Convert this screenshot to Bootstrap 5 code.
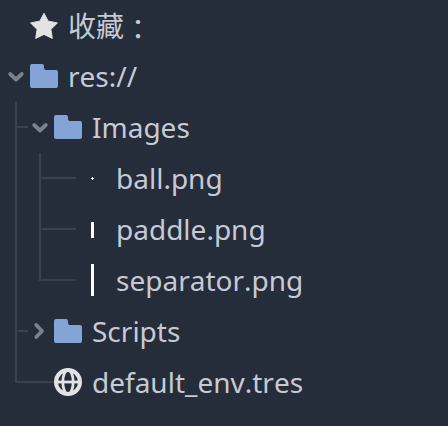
<!DOCTYPE html>
<html lang="zh-CN">
<head>
<meta charset="utf-8">
<meta name="viewport" content="width=device-width, initial-scale=1">
<title>FileSystem</title>
<link href="https://cdn.jsdelivr.net/npm/bootstrap@5.3.0/dist/css/bootstrap.min.css" rel="stylesheet">
<style>
body { background: #252c3a; color: #c6cad5; font-family: "Noto Sans", "Noto Sans CJK SC", sans-serif; font-size: 28px; font-kerning: none; overflow: hidden; }
.tree { padding-left: 4px; }
.tree-row { height: 51px; }
.tree-row svg { flex: none; overflow: visible; }
.cell { width: 24px; height: 51px; fill: none; stroke: #3a404d; stroke-width: 2; }
.cell .arrow { stroke: #7c808a; stroke-width: 3.8; stroke-linecap: round; stroke-linejoin: round; }
.glyph { width: 32px; height: 32px; margin-top: 10px; fill: #e2e3e4; }
.glyph.folder { fill: #84a4d8; }
.glyph.thumb { fill: #fff; }
.tree-label { margin-left: 8px; line-height: 51px; white-space: nowrap; }
.cjk-label { line-height: 52px; }
.full-colon { font-family: "Noto Sans CJK TC", sans-serif; line-height: 1; vertical-align: -3px; }
</style>
</head>
<body>
<svg class="d-none">
  <symbol id="folder" viewBox="0 0 32 32"><path d="M4 3H14Q16 3 16 5V7Q16 9 18 9H28Q30 9 30 11V25Q30 27 28 27H4Q2 27 2 25V5Q2 3 4 3Z"/></symbol>
</svg>
<ul class="tree list-unstyled mb-0">
  <li class="tree-row d-flex align-items-start">
    <svg class="cell"></svg>
    <svg class="glyph"><path stroke="#e2e3e4" stroke-linejoin="round" d="M16 3.3L20.2 11.2L29.4 12.9L22.9 19.4L24.3 28.4L16 24.4L7.7 28.4L9.1 19.4L2.6 12.9L11.8 11.2Z"/></svg>
    <span class="tree-label cjk-label">收藏<span class="full-colon" lang="zh-TW">：</span></span>
  </li>
  <li class="tree-row d-flex align-items-start">
    <svg class="cell"><path class="arrow" d="M6.2 23L12 28.5L17.8 23"/></svg>
    <svg class="glyph folder"><use href="#folder"/></svg>
    <span class="tree-label">res://</span>
  </li>
  <li class="tree-row d-flex align-items-start">
    <svg class="cell"><path d="M12 0V51M13 25H24"/></svg>
    <svg class="cell"><path class="arrow" d="M6.2 23L12 28.5L17.8 23"/></svg>
    <svg class="glyph folder"><use href="#folder"/></svg>
    <span class="tree-label">Images</span>
  </li>
  <li class="tree-row d-flex align-items-start">
    <svg class="cell"><path d="M12 0V51"/></svg>
    <svg class="cell"><path d="M12 0V51M13 25H24"/></svg>
    <svg class="cell"><path d="M0 25H24"/></svg>
    <svg class="glyph thumb"><path d="M16 14H17V15H18V16H17V17H16V16H15V15H16Z"/></svg>
    <span class="tree-label">ball.png</span>
  </li>
  <li class="tree-row d-flex align-items-start">
    <svg class="cell"><path d="M12 0V51"/></svg>
    <svg class="cell"><path d="M12 0V51M13 25H24"/></svg>
    <svg class="cell"><path d="M0 25H24"/></svg>
    <svg class="glyph thumb"><path d="M15 8H18V24H15Z"/></svg>
    <span class="tree-label">paddle.png</span>
  </li>
  <li class="tree-row d-flex align-items-start">
    <svg class="cell"><path d="M12 0V51"/></svg>
    <svg class="cell"><path d="M12 0V25H24"/></svg>
    <svg class="cell"><path d="M0 25H24"/></svg>
    <svg class="glyph thumb"><path d="M15 -1H18V31H15Z"/></svg>
    <span class="tree-label">separator.png</span>
  </li>
  <li class="tree-row d-flex align-items-start">
    <svg class="cell"><path d="M12 0V51M13 25H24"/></svg>
    <svg class="cell"><path class="arrow" d="M8.3 19L14 25L8.3 31"/></svg>
    <svg class="glyph folder"><use href="#folder"/></svg>
    <span class="tree-label">Scripts</span>
  </li>
  <li class="tree-row d-flex align-items-start">
    <svg class="cell"><path d="M12 0V25H24"/></svg>
    <svg class="cell"><path d="M0 25H27"/></svg>
    <svg class="glyph"><g fill="#252c3a" stroke="#e2e3e4"><circle cx="16" cy="15" r="12" stroke-width="4"/><ellipse cx="16" cy="15" rx="5.2" ry="12" stroke-width="2.8" fill="none"/><path d="M4 15H28" stroke-width="2.8"/></g></svg>
    <span class="tree-label">default_env.tres</span>
  </li>
</ul>
<script src="https://cdn.jsdelivr.net/npm/bootstrap@5.3.0/dist/js/bootstrap.bundle.min.js"></script>
</body>
</html>
